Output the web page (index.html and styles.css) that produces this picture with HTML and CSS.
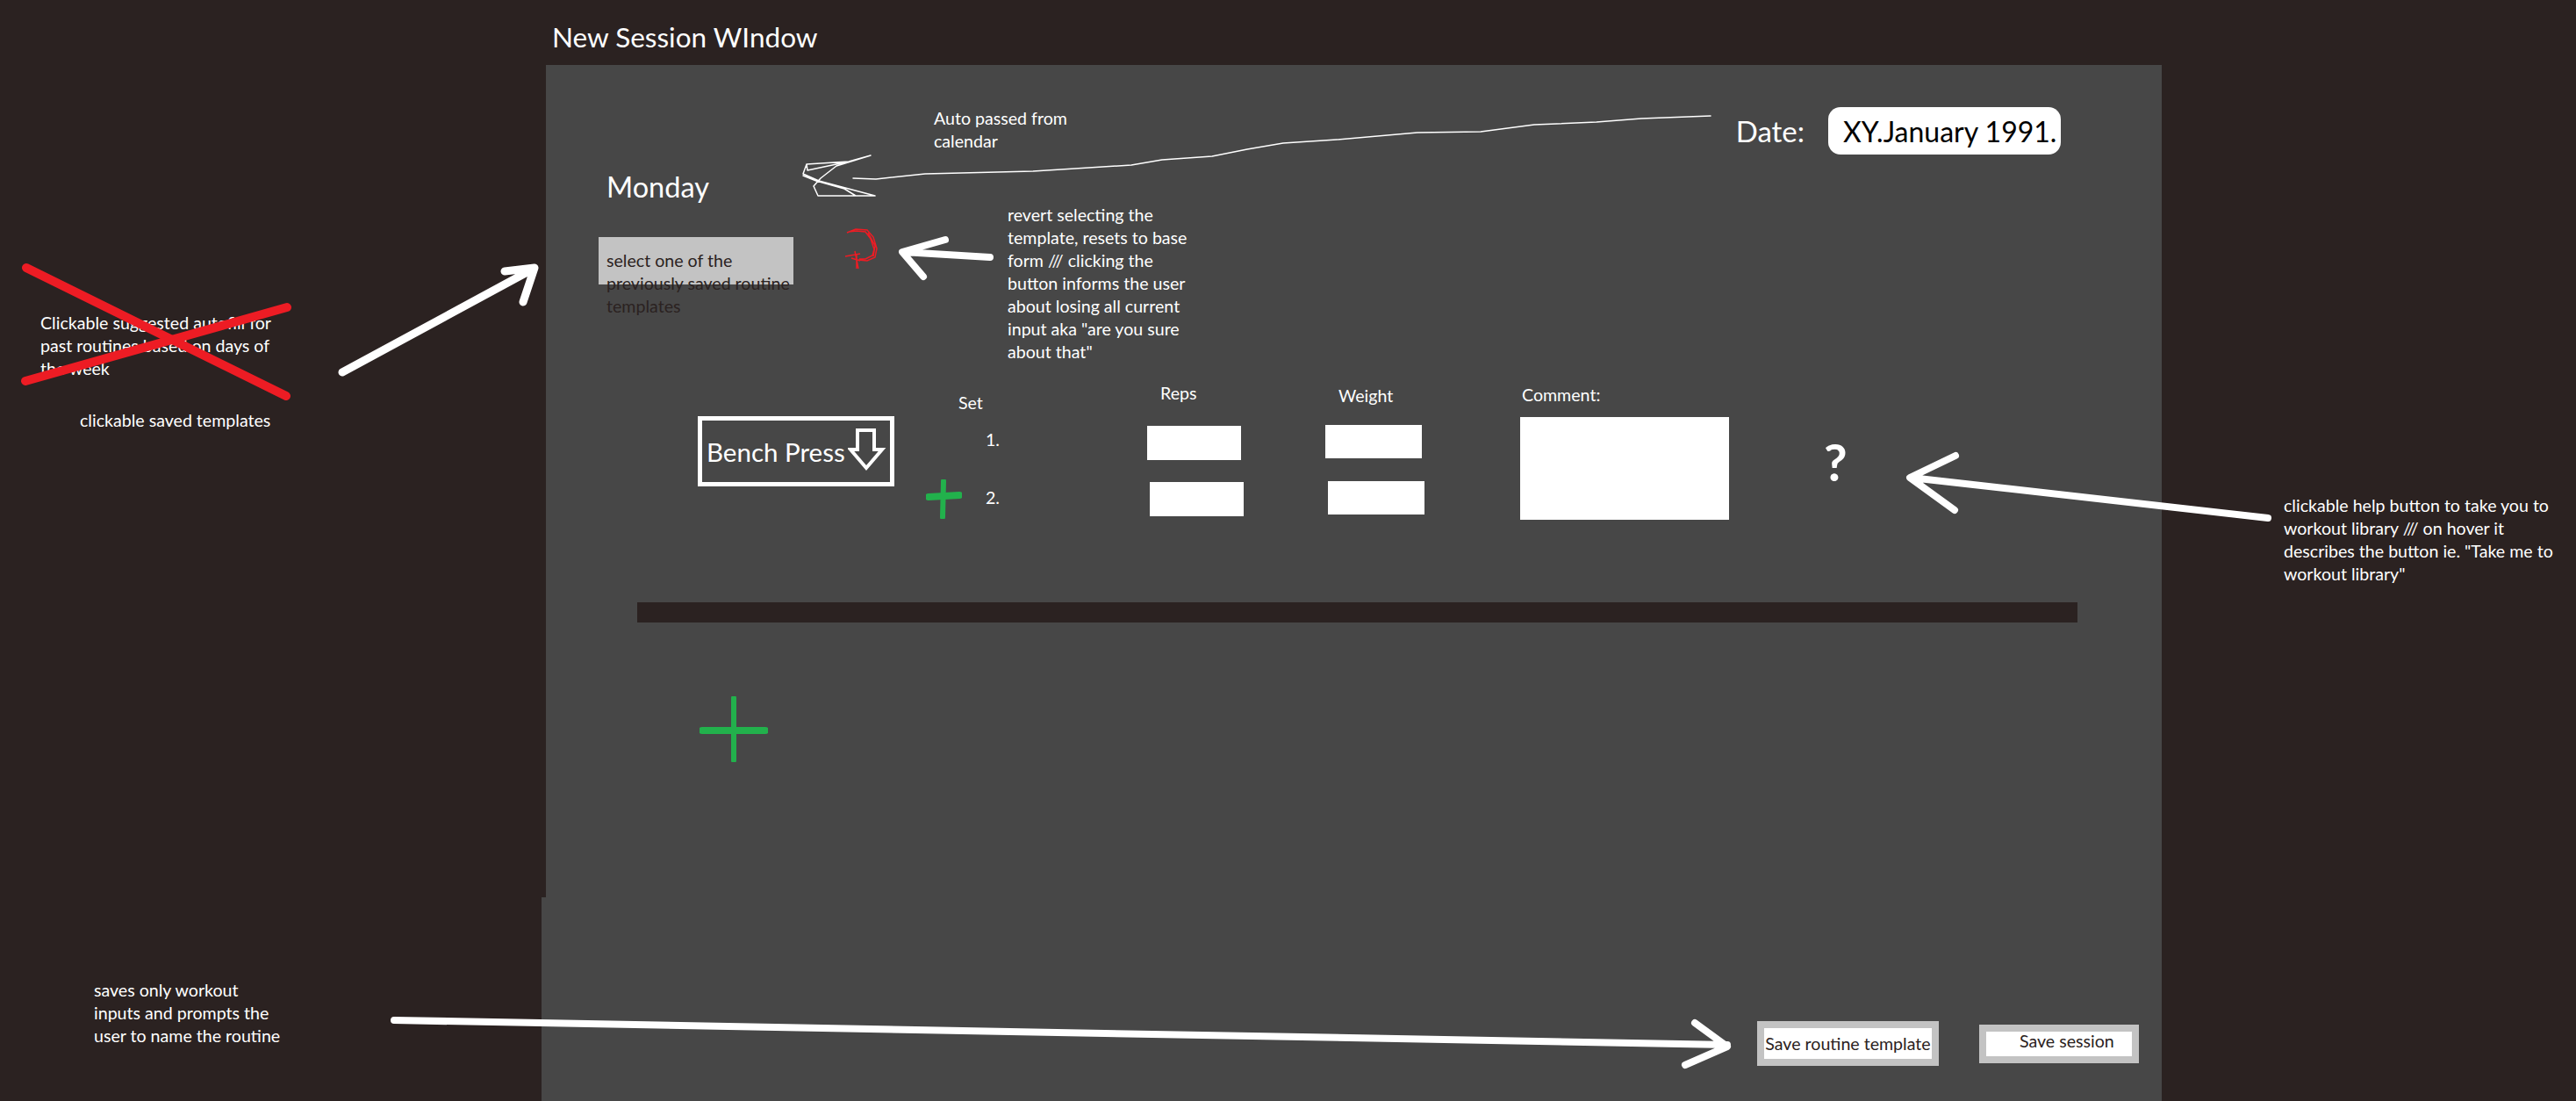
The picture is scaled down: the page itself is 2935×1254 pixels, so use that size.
FILE: index.html

```html
<!DOCTYPE html>
<html lang="en">
<head>
    <meta charset="UTF-8">
    <title>New Session Window</title>
    <link rel="stylesheet" href="styles.css">
</head>
<body>

<div class="canvas">

    <div class="window">
        <h1 class="window-title">New Session WIndow</h1>

        <div class="panel">
            <div class="date-row">
                <span class="date-label">Date:</span>
                <span class="date-pill">XY.January 1991.</span>
            </div>

            <h2 class="day">Monday</h2>

            <div class="template-box">select one of the<br>previously saved routine<br>templates</div>

            <div class="exercise">
                <div class="bench">
                    <span>Bench Press</span>
                    <svg class="bench-arrow" width="44" height="50" viewBox="0 0 44 50">
                        <polygon points="11,2 30,2 30,24 39,24 21,45 3,24 11,24" fill="none" stroke="#fff" stroke-width="4"/>
                    </svg>
                </div>

                <div class="set-col">
                    <div class="set-label">Set</div>
                    <div class="set-one">1.</div>
                    <div class="set-two">
                        <svg width="41" height="45" viewBox="0 0 41 45">
                            <path d="M20 2 L19 43" stroke="#22b14c" stroke-width="6" stroke-linecap="round" fill="none"/>
                            <path d="M3 20 L38 18" stroke="#22b14c" stroke-width="8" stroke-linecap="round" fill="none"/>
                        </svg>
                        <span class="set-two-num">2.</span>
                    </div>
                </div>

                <div class="reps-col">
                    <div class="col-label">Reps</div>
                    <div class="field field-a"></div>
                    <div class="field field-b"></div>
                </div>

                <div class="weight-col">
                    <div class="col-label">Weight</div>
                    <div class="field field-a"></div>
                    <div class="field field-b"></div>
                </div>

                <div class="comment-col">
                    <div class="col-label">Comment:</div>
                    <div class="comment-box"></div>
                </div>

                <div class="help">?</div>
            </div>

            <div class="divider"></div>

            <svg class="add-exercise" width="78" height="75" viewBox="0 0 78 75">
                <path d="M39 2 L39 73" stroke="#22b14c" stroke-width="6" stroke-linecap="round" fill="none"/>
                <path d="M3 39 L75 39" stroke="#22b14c" stroke-width="8" stroke-linecap="round" fill="none"/>
            </svg>

            <div class="actions">
                <div class="btn btn-template"><span>Save routine template</span></div>
                <div class="btn btn-session"><span>Save session</span></div>
            </div>
        </div>
    </div>

    <!-- sketched notes around the window -->
    <p class="note note-autofill">Clickable suggested autofill for<br>past routines based on days of<br>the week</p>
    <p class="note note-saved">clickable saved templates</p>
    <p class="note note-auto">Auto passed from<br>calendar</p>
    <p class="note note-revert">revert selecting the<br>template, resets to base<br>form /// clicking the<br>button informs the user<br>about losing all current<br>input aka "are you sure<br>about that"</p>
    <p class="note note-help">clickable help button to take you to<br>workout library /// on hover it<br>describes the button ie. "Take me to<br>workout library"</p>
    <p class="note note-routine">saves only workout<br>inputs and prompts the<br>user to name the routine</p>

    <svg class="sketch" width="2935" height="1254" viewBox="0 0 2935 1254">
        <g stroke="#ed1c24" stroke-width="10" stroke-linecap="round" fill="none">
            <path d="M30 305 L326 451"/>
            <path d="M29 434 L327 350"/>
        </g>
        <g fill="none" stroke="#fff" stroke-linecap="round" stroke-linejoin="round">
            <path stroke-width="9" d="M390 424 L608 306 M575 309 L609 305 L596 344"/>
            <path stroke-width="8" d="M1128 293 L1029 287 M1077 273 L1028 287 L1052 315"/>
            <path stroke-width="8" d="M2584 590 L2177 544 M2228 519 L2176 544 L2227 581"/>
            <path stroke-width="8" d="M449 1162 L1968 1190 M1931 1165 L1968 1192 L1920 1213"/>
            <path stroke-width="1.5" d="M1949 132 L1870 135 L1819 139 L1748 142 L1687 150 L1615 151 L1523 159 L1462 163 L1421 170 L1381 178 L1324 182 L1289 188 L1177 195 L1054 198 L998 204 L972 203"/>
            <path stroke-width="1.5" d="M992 177 L967 184 L919 187 L915 198 L933 206 L997 223 L932 223 L927 212 L935 203 L953 189 L992 177 M919 187 L920 194 L967 184 M915 200 L930 206 L962 215 L975 223"/>
        </g>
        <path d="M965 265 L975 261 L988 262 L995 270 L999 283 L997 293 L988 297 L978 296 M967 264 L976 263 L986 264 L992 272 L996 284 L994 291 L986 295 L979 295 M989 265 L997 280 L995 292 M963 292 L980 289 M974 286 L978 306 M976 290 L976 306 M970 294 L980 297" fill="none" stroke="#ed1c24" stroke-width="1.5"/>
    </svg>

</div>

</body>
</html>
```

FILE: styles.css

```css
* { box-sizing: border-box; }
html, body { margin: 0; padding: 0; }
body { background: #2b2221; color: #fff; font-family: "Lato", "Open Sans", sans-serif; }

.canvas { position: relative; width: 2935px; height: 1254px; overflow: hidden; background: #2b2221; }

.window { width: 1841px; margin-left: 622px; }
.window-title { margin: 0; padding: 22px 0 0 7px; height: 74px; font-size: 31.5px; line-height: 40px; font-weight: 400; }

.panel { position: relative; display: flex; flex-direction: column; height: 1180px; padding-top: 48px; background: #474747; }
.panel::after { content: ""; position: absolute; left: -5px; top: 948px; bottom: 0; width: 5px; background: #474747; }

.date-row { display: flex; justify-content: flex-end; align-items: center; gap: 27px; padding-right: 115px; }
.date-label { font-size: 33px; line-height: 40px; }
.date-pill { width: 265px; height: 54px; padding: 8px 0 0 17px; border-radius: 14px; background: #fff; color: #000; font-size: 32px; line-height: 40px; white-space: nowrap; }

.day { margin: 17px 0 0 69px; font-size: 32.5px; line-height: 40px; font-weight: 400; }

.template-box { width: 222px; height: 54px; margin: 37px 0 0 60px; padding: 14px 0 0 9px; background: #c3c3c3; color: #2b2221; font-size: 19.6px; line-height: 26px; white-space: nowrap; }

.exercise { display: flex; margin: 112px 0 0 173px; font-size: 19.6px; line-height: 26px; }

.bench { display: flex; align-items: center; width: 224px; height: 80px; margin-top: 38px; padding: 1px 4px 0 5px; border: 5px solid #fff; font-size: 29.5px; white-space: nowrap; }
.bench-arrow { display: block; margin: -4px 0 0 auto; }

.set-col { width: 110px; margin: 10px 0 0 36px; }
.set-label { padding-left: 37px; }
.set-one { margin-top: 16px; padding-left: 68px; }
.set-two { display: flex; align-items: center; gap: 27px; margin-top: 32px; }
.set-two svg { display: block; }
.set-two-num { padding-bottom: 4px; }

.reps-col { width: 110px; margin: -1px 0 0 142px; }
.reps-col .col-label { padding-left: 15px; }
.reps-col .field { width: 107px; height: 39px; }
.reps-col .field-a { margin-top: 24px; }
.reps-col .field-b { margin: 25px 0 0 3px; }

.weight-col { width: 113px; margin: 2px 0 0 93px; }
.weight-col .col-label { padding-left: 15px; }
.weight-col .field { width: 110px; height: 38px; }
.weight-col .field-a { margin-top: 20px; }
.weight-col .field-b { margin: 26px 0 0 3px; }

.field { background: #fff; }

.comment-col { width: 238px; margin: 1px 0 0 109px; }
.comment-col .col-label { padding-left: 2px; }
.comment-box { width: 238px; height: 117px; margin-top: 12px; background: #fff; }

.help { margin: 60px 0 0 108px; font-size: 58px; line-height: 60px; font-weight: 700; }

.divider { width: 1641px; height: 23px; margin: 94px 0 0 104px; background: #2b2221; }

.add-exercise { display: block; margin: 84px 0 0 175px; }

.actions { display: flex; justify-content: flex-end; align-items: center; gap: 46px; margin-top: 295px; padding-right: 26px; }
.btn { display: flex; border: 8px solid #c3c3c3; background: #fff; color: #2b2221; font-size: 19.6px; white-space: nowrap; }
.btn-template { width: 207px; height: 51px; align-items: center; justify-content: center; }
.btn-session { width: 182px; height: 44px; padding: 0 0 6px 38px; align-items: center; }

.note { position: absolute; margin: 0; font-size: 19.6px; line-height: 26px; white-space: nowrap; }
.note-autofill { left: 46px; top: 355px; }
.note-saved { left: 91px; top: 466px; }
.note-auto { left: 1064px; top: 122px; }
.note-revert { left: 1148px; top: 232px; }
.note-help { left: 2602px; top: 563px; }
.note-routine { left: 107px; top: 1115px; }

.sketch { position: absolute; left: 0; top: 0; pointer-events: none; }
```
